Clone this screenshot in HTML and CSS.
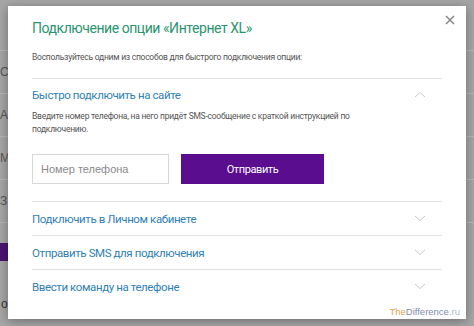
FILE: index.html
```html
<!DOCTYPE html>
<html>
<head>
    <title>Подключение опции</title>
    <link rel="stylesheet" href="styles.css">
</head>
<body>
    <div class="backdrop">
        <div class="bg-row bg-top"></div>
        <div class="bg-row">С</div>
        <div class="bg-row">А</div>
        <div class="bg-row">М</div>
        <div class="bg-row">З</div>
        <div class="bg-purple"></div>
        <div class="bg-tail">о</div>
    </div>

    <div class="modal">
        <svg class="close" width="10" height="10" viewBox="0 0 10 10">
            <path d="M1 1L9 9M9 1L1 9" stroke="#8a8a8a" stroke-width="1.6" fill="none"/>
        </svg>
        <h1 class="title">Подключение опции «Интернет XL»</h1>
        <p class="lead">Воспользуйтесь одним из способов для быстрого подключения опции:</p>

        <div class="acc">
            <div class="acc-item open">
                <div class="acc-head">
                    <span>Быстро подключить на сайте</span>
                    <svg class="chev" width="12" height="7" viewBox="0 0 12 7"><path d="M1 6L6 1.5L11 6" stroke="#c8c8c8" stroke-width="1" fill="none"/></svg>
                </div>
                <p class="acc-text">Введите номер телефона, на него придёт SMS-сообщение с краткой инструкцией по подключению.</p>
                <div class="form">
                    <input class="phone" type="text" placeholder="Номер телефона">
                    <button class="send">Отправить</button>
                </div>
            </div>
            <div class="acc-item">
                <div class="acc-head">
                    <span>Подключить в Личном кабинете</span>
                    <svg class="chev" width="12" height="7" viewBox="0 0 12 7"><path d="M1 1L6 5.5L11 1" stroke="#c8c8c8" stroke-width="1" fill="none"/></svg>
                </div>
            </div>
            <div class="acc-item">
                <div class="acc-head">
                    <span>Отправить SMS для подключения</span>
                    <svg class="chev" width="12" height="7" viewBox="0 0 12 7"><path d="M1 1L6 5.5L11 1" stroke="#c8c8c8" stroke-width="1" fill="none"/></svg>
                </div>
            </div>
            <div class="acc-item">
                <div class="acc-head">
                    <span>Ввести команду на телефоне</span>
                    <svg class="chev" width="12" height="7" viewBox="0 0 12 7"><path d="M1 1L6 5.5L11 1" stroke="#c8c8c8" stroke-width="1" fill="none"/></svg>
                </div>
            </div>
        </div>

        <div class="mark"><span class="mark-the">The</span>Difference<span class="mark-ru">.ru</span></div>
    </div>
</body>
</html>
```

FILE: styles.css
```css
body {
    margin: 0;
    background: #a6a6a6;
    font-family: Roboto, "Liberation Sans", sans-serif;
    width: 474px;
    height: 326px;
    overflow: hidden;
    position: relative;
}
.backdrop {
    color: #555;
    font-family: "Liberation Sans", Arial, sans-serif;
    font-size: 12px;
}
.bg-row {
    height: 42px;
    line-height: 42px;
    border-bottom: 1px solid #b8b8b8;
}
.bg-row.bg-top {
    height: 50px;
}
.bg-purple {
    margin-top: 20px;
    width: 8px;
    height: 18px;
    background: #4a1470;
}
.bg-tail {
    margin-top: 36px;
    padding-left: 1px;
    color: #333;
}
.modal {
    position: absolute;
    left: 8px;
    top: 6px;
    width: 458px;
    height: 313px;
    box-sizing: border-box;
    padding: 11px 24px 0 24px;
    background: #fff;
    box-shadow: 0 2px 10px rgba(0, 0, 0, 0.35);
}
.close {
    position: absolute;
    right: 11px;
    top: 9px;
}
.title {
    margin: 0;
    font-size: 14px;
    letter-spacing: -0.45px;
    line-height: 22px;
    font-weight: normal;
    color: #2a9470;
}
.lead {
    margin: 12px 0 0;
    font-size: 8.5px;
    letter-spacing: -0.25px;
    line-height: 13px;
    color: #555;
}
.acc {
    margin-top: 14px;
}
.acc-item {
    border-top: 1px solid #e2e2e2;
}
.acc-head {
    height: 33px;
    display: flex;
    align-items: center;
    justify-content: space-between;
    padding-right: 16px;
    font-size: 11.5px;
    letter-spacing: -0.4px;
    color: #3181b5;
}
.open .acc-head {
    height: 31px;
}
.acc-text {
    margin: 0;
    padding-right: 60px;
    font-size: 8.5px;
    letter-spacing: -0.25px;
    line-height: 13px;
    color: #555;
}
.form {
    display: flex;
    gap: 12px;
    margin-top: 18px;
    padding-bottom: 17px;
}
.phone {
    width: 137px;
    height: 30px;
    box-sizing: border-box;
    border: 1px solid #d8d8d8;
    padding: 0 8px;
    font-family: "Liberation Sans", Arial, sans-serif;
    font-size: 11px;
    color: #333;
}
.phone::placeholder {
    color: #8a8a8a;
}
.send {
    width: 143px;
    height: 30px;
    border: none;
    background: #5a0d8e;
    color: #fff;
    font-family: Roboto, sans-serif;
    font-size: 11px;
    letter-spacing: -0.4px;
}
.mark {
    position: absolute;
    right: 6px;
    bottom: 2px;
    font-family: "Liberation Sans", Arial, sans-serif;
    font-size: 9.5px;
    color: #7a8ea8;
}
.mark-the {
    color: #e8a24a;
}
.mark-ru {
    color: #b0b8c4;
}
```
